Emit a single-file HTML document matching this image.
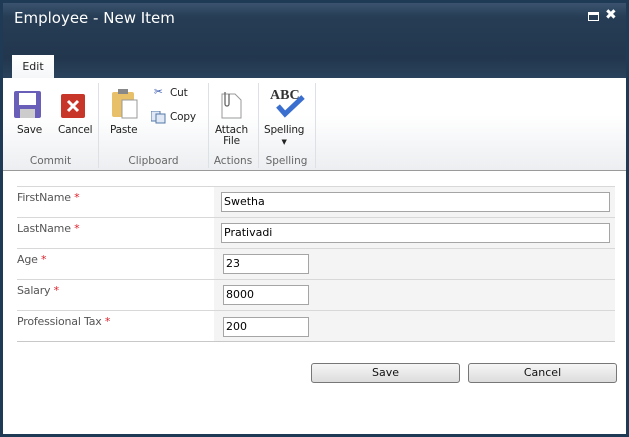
<!DOCTYPE html>
<html><head><style>
*{margin:0;padding:0;box-sizing:border-box}
body{width:629px;height:437px;overflow:hidden;background:#1f3a55;font-family:"DejaVu Sans","Liberation Sans",sans-serif;font-size:11px;position:relative}
.frame{position:absolute;left:3px;top:3px;width:623px;height:431px;background:#fff;overflow:hidden}
.title{position:absolute;left:0;top:0;width:623px;height:75px;background:linear-gradient(#3b536e 0,#263d55 14px,#22374e 55px,#2a425c 75px)}
.title h1{position:absolute;left:11px;top:6px;color:#fff;font:15px "DejaVu Sans",sans-serif;font-weight:normal}
.tab{position:absolute;left:9px;top:52px;width:42px;height:24px;background:linear-gradient(#fff,#f4f6f8);color:#222;font-size:11px;text-align:center;line-height:24px}
.ribbon{position:absolute;left:0;top:75px;width:623px;height:93px;background:linear-gradient(#fff 40%,#eceef1);border-bottom:1px solid #9a9a9a}
.sep{position:absolute;top:5px;width:1px;height:85px;background:#dde0e4}
.lbl{position:absolute;color:#222;font-size:10.5px;text-align:center;line-height:11px;letter-spacing:-0.2px}
.grp{position:absolute;top:77px;color:#666;font-size:10.5px;text-align:center}
.row{position:absolute;left:14px;width:598px;height:31px;border-top:1px solid #d8d8d8}
.row .l{position:absolute;left:0;top:4px;color:#555;font-size:11px;letter-spacing:-0.2px}
.row .l b{color:#e0212b;font-weight:normal}
.row .v{position:absolute;left:197px;top:0;width:401px;height:30px;background:#f4f4f4}
.inp{position:absolute;height:20px;border:1px solid #a5a5a5;background:#fff;font-size:11px;padding:2px 2px;color:#000}
.btn{position:absolute;top:360px;width:149px;height:20px;border:1px solid #777;border-radius:3px;background:linear-gradient(#f6f6f6,#dcdcdc);text-align:center;line-height:18px;color:#111}
</style></head><body>
<div class="frame">
<div class="title"><h1>Employee - New Item</h1>
<div style="position:absolute;left:585px;top:9px;width:11px;height:9px;border:1px solid #fff;border-top-width:3px"></div>
<div style="position:absolute;left:602px;top:4px;color:#fff;font-size:14px;font-weight:bold">✖</div>
<div class="tab">Edit</div></div>
<div class="ribbon">
<svg style="position:absolute;left:11px;top:13px" width="27" height="27"><rect x="0" y="0" width="27" height="27" rx="2" fill="#6a5fb8"/><rect x="5" y="2" width="17" height="12" fill="#fff"/><rect x="6" y="18" width="15" height="9" fill="#ccc"/></svg>
<svg style="position:absolute;left:58px;top:16px" width="24" height="24"><rect width="24" height="24" rx="2" fill="#c8362a"/><path d="M7 7l10 10M17 7L7 17" stroke="#fff" stroke-width="3"/></svg>
<div class="lbl" style="left:14px;top:47px">Save</div>
<div class="lbl" style="left:55px;top:47px">Cancel</div>
<div class="grp" style="left:0;width:95px">Commit</div>
<div class="sep" style="left:95px"></div>
<svg style="position:absolute;left:108px;top:11px" width="27" height="30"><rect x="1" y="3" width="22" height="25" rx="2" fill="#e8c06a"/><rect x="7" y="0" width="10" height="5" fill="#888"/><rect x="11" y="11" width="15" height="18" fill="#fff" stroke="#999"/></svg>
<div class="lbl" style="left:107px;top:47px">Paste</div>
<div class="lbl" style="left:151px;top:9px;color:#35a">✂</div>
<div class="lbl" style="left:167px;top:10px">Cut</div>
<svg style="position:absolute;left:148px;top:33px" width="15" height="13"><rect x="0" y="0" width="9" height="10" fill="#dfe8f4" stroke="#5577aa"/><rect x="5" y="3" width="9" height="9" fill="#dfe8f4" stroke="#5577aa"/></svg>
<div class="lbl" style="left:167px;top:34px">Copy</div>
<div class="grp" style="left:96px;width:109px">Clipboard</div>
<div class="sep" style="left:205px"></div>
<svg style="position:absolute;left:214px;top:12px" width="28" height="30"><path d="M5 4h13l6 6v18H5z" fill="#fff" stroke="#999"/><path d="M8 2v12a2 2 0 0 0 4 0V4" stroke="#666" fill="none" stroke-width="1.3"/></svg>
<div class="lbl" style="left:212px;top:47px">Attach<br>File</div>
<div class="grp" style="left:205px;width:50px">Actions</div>
<div class="sep" style="left:255px"></div>
<div style="position:absolute;left:267px;top:10px;font:bold 14px 'Liberation Serif',serif;color:#333">ABC</div>
<svg style="position:absolute;left:272px;top:16px" width="30" height="24"><path d="M3 12l7 8L28 3" stroke="#3a6fd0" stroke-width="5" fill="none"/></svg>
<div class="lbl" style="left:261px;top:47px">Spelling<br><span style="font-size:7px">▼</span></div>
<div class="grp" style="left:255px;width:57px">Spelling</div>
<div class="sep" style="left:312px"></div>
</div>
<div class="row" style="top:183px"><div class="l">FirstName <b>*</b></div><div class="v"><div class="inp" style="left:7px;top:5px;width:389px">Swetha</div></div></div>
<div class="row" style="top:214px"><div class="l">LastName <b>*</b></div><div class="v"><div class="inp" style="left:7px;top:5px;width:389px">Prativadi</div></div></div>
<div class="row" style="top:245px"><div class="l">Age <b>*</b></div><div class="v"><div class="inp" style="left:9px;top:5px;width:86px">23</div></div></div>
<div class="row" style="top:276px"><div class="l">Salary <b>*</b></div><div class="v"><div class="inp" style="left:9px;top:5px;width:86px">8000</div></div></div>
<div class="row" style="top:307px;height:32px;border-bottom:1px solid #c8c8c8"><div class="l">Professional Tax <b>*</b></div><div class="v"><div class="inp" style="left:9px;top:6px;width:86px">200</div></div></div>
<div class="btn" style="left:308px">Save</div>
<div class="btn" style="left:465px">Cancel</div>
</div>
</body></html>
